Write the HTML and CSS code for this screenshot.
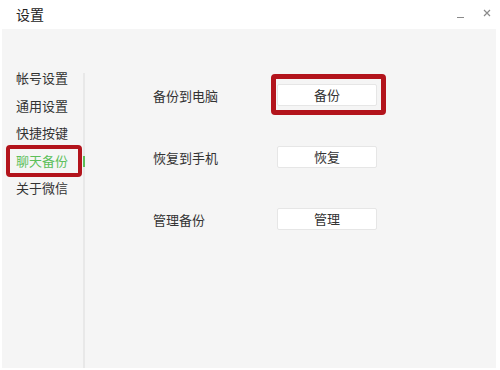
FILE: index.html
```html
<!DOCTYPE html>
<html lang="zh">
<head>
<meta charset="utf-8">
<title>设置</title>
<link rel="stylesheet" href="styles.css">
</head>
<body>
<div class="window">
  <div class="titlebar">
    <span class="title">设置</span>
    <div class="controls">
      <span class="min"></span>
      <svg class="close" width="8" height="8" viewBox="0 0 8 8"><path d="M1 1L7 7M7 1L1 7" stroke="#8a8a8a" stroke-width="1.2" fill="none"/></svg>
    </div>
  </div>
  <div class="panel">
    <nav class="sidebar">
      <div class="nav-item">帐号设置</div>
      <div class="nav-item">通用设置</div>
      <div class="nav-item">快捷按键</div>
      <div class="nav-item active">聊天备份</div>
      <div class="nav-item">关于微信</div>
    </nav>
    <div class="divider"></div>
    <main class="content">
      <div class="row">
        <span class="label">备份到电脑</span>
        <button class="btn highlight">备份</button>
      </div>
      <div class="row">
        <span class="label">恢复到手机</span>
        <button class="btn">恢复</button>
      </div>
      <div class="row">
        <span class="label">管理备份</span>
        <button class="btn">管理</button>
      </div>
    </main>
  </div>
</div>
</body>
</html>
```
FILE: styles.css
```css
html, body {
  margin: 0;
  padding: 0;
  background: #ffffff;
}
body {
  font-family: "Noto Sans CJK SC", "Noto Sans", sans-serif;
  color: #333;
  width: 500px;
  height: 370px;
  overflow: hidden;
}
.window {
  display: flex;
  flex-direction: column;
  height: 368px;
}
.titlebar {
  height: 29px;
  display: flex;
  align-items: center;
  justify-content: space-between;
  padding: 0 0 0 16px;
  box-sizing: border-box;
}
.title {
  font-size: 14px;
  color: #222;
  line-height: 1;
  margin-top: -2px;
}
.controls {
  display: flex;
  align-items: center;
  gap: 19px;
  margin-right: 9px;
  margin-top: -4px;
}
.min {
  display: block;
  width: 7px;
  height: 1px;
  background: #8a8a8a;
  margin-top: 10px;
}
.close {
  display: block;
}
.panel {
  flex: 1;
  display: flex;
  background: #f5f5f5;
  margin: 0 4px 0 2px;
}
.sidebar {
  width: 81px;
  padding-top: 35px;
  box-sizing: border-box;
}
.nav-item {
  position: relative;
  height: 27.5px;
  line-height: 27.5px;
  padding-left: 14px;
  font-size: 13px;
  color: #333;
}
.nav-item.active {
  color: #5cbf5a;
}
.nav-item.active::after {
  content: "";
  position: absolute;
  right: -2px;
  top: 9px;
  width: 2px;
  height: 11px;
  background: #5cbf5a;
}
.nav-item.active::before {
  content: "";
  position: absolute;
  left: 4px;
  right: 1px;
  top: -2px;
  bottom: -3px;
  border: 4px solid #b3141c;
  border-radius: 4px;
}
.divider {
  width: 2px;
  margin-top: 44px;
  background: #e8e8e8;
}
.content {
  flex: 1;
  padding: 55px 0 0 68px;
  display: flex;
  flex-direction: column;
  gap: 40px;
}
.row {
  display: flex;
  align-items: center;
  height: 22px;
}
.label {
  width: 124px;
  font-size: 13px;
  color: #333;
}
.btn {
  position: relative;
  width: 100px;
  height: 22px;
  padding: 0;
  background: #ffffff;
  border: 1px solid #e6e6e6;
  border-radius: 2px;
  font-family: "Noto Sans CJK SC", "Noto Sans", sans-serif;
  font-size: 13px;
  color: #333;
  line-height: 20px;
}
.btn.highlight::after {
  content: "";
  position: absolute;
  left: -7px;
  right: -10px;
  top: -11px;
  bottom: -10px;
  border: 5px solid #b3141c;
  border-radius: 4px;
}
```
